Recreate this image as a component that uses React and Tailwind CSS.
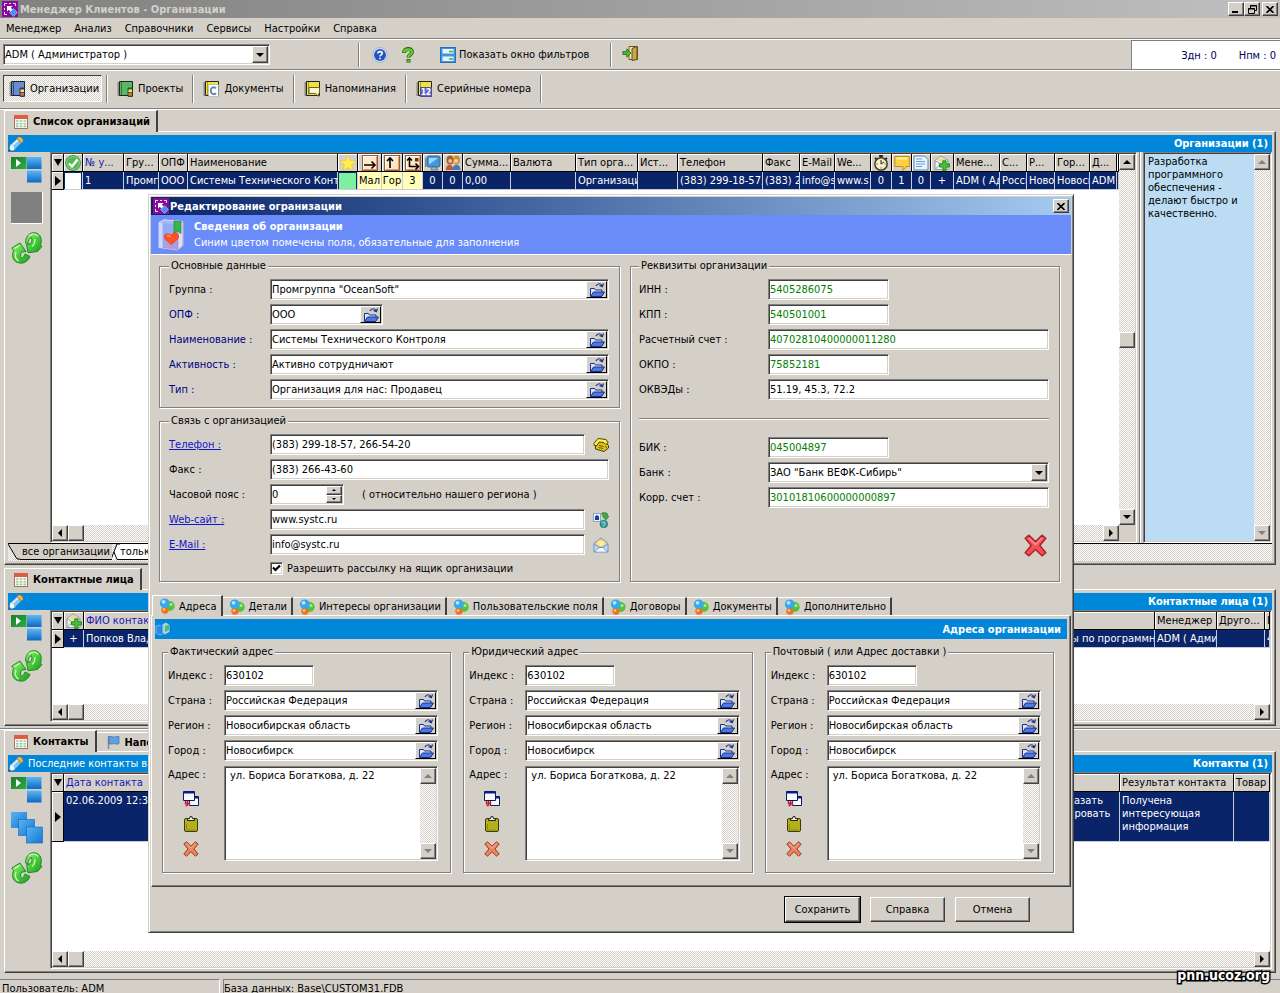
import { useId } from "react";
import clsx from "clsx";

const SUNKEN =
  "border border-t-[#808080] border-l-[#808080] border-b-white border-r-white shadow-[inset_1px_1px_0_#404040,inset_-1px_-1px_0_#d4d0c8]";
const RAISED =
  "border border-t-white border-l-white border-b-[#404040] border-r-[#404040] shadow-[inset_-1px_-1px_0_#808080] bg-[#d4d0c8]";
const DITHER =
  "bg-[conic-gradient(#ffffff_25%,#d4d0c8_0_50%,#ffffff_0_75%,#d4d0c8_0)] bg-[length:2px_2px]";

/* ---------- icons ---------- */

function Svg({ size = 16, box = 16, children }) {
  return (
    <svg width={size} height={size} viewBox={`0 0 ${box} ${box}`} className="block shrink-0" aria-hidden="true">
      {children}
    </svg>
  );
}

const AppIcon = () => (
  <Svg>
    <rect width="16" height="16" fill="#8a0a9a" />
    <path d="M2.500 5V2.500H5M7 2.500h2M11 2.500h2.500V5M2.500 7v2M2.500 11v2.500H5" stroke="#f4d8ff" fill="none" />
    <path d="M5 5h5.500L8.800 6.700 11 9 9 11 6.700 8.800 5 10.500z" fill="#fff" />
    <path d="M11.500 7.500 15.500 11.500l-4 4-4-4z" fill="#4a90f0" stroke="#9cc8ff" strokeWidth=".6" />
  </Svg>
);

const HelpBlue = () => (
  <Svg>
    <circle cx="8" cy="8" r="7.300" fill="#e4edfa" stroke="#8aa4cf" strokeWidth=".8" />
    <circle cx="8" cy="8" r="6" fill="#2456b8" />
    <path d="M5.800 6.500C5.800 4 10.200 4 10.200 6.500 10.200 8 8 7.800 8 9.500M8 10.800v1.500" stroke="#fff" strokeWidth="1.600" fill="none" />
  </Svg>
);

const HelpGreen = () => (
  <Svg>
    <path d="M4 6C4 .8 12 .8 12 5 12 7.500 8.500 7.500 8.500 10.500M8.500 12v3.500" stroke="#1d6b10" strokeWidth="4" fill="none" />
    <path d="M4 5.500C4.300 1.500 12 1.500 12 5 12 7.500 8.500 7.500 8.500 10M8.500 12.700v2" stroke="#6fd02c" strokeWidth="2.200" fill="none" />
  </Svg>
);

const FilterIcon = () => (
  <Svg>
    <rect x=".5" y=".5" width="15" height="15" fill="#3f97e0" stroke="#2a70b8" />
    <rect x="2.500" y="2" width="11" height="4.500" fill="#e8f5ff" />
    <rect x="2.500" y="9.500" width="11" height="4.500" fill="#e8f5ff" />
    <path d="M9 4.500h4M9 12h4" stroke="#58a830" strokeWidth="1.500" />
  </Svg>
);

const ExitIcon = () => (
  <Svg>
    <path d="M7 1.500h8.500v13H7z" fill="#efe9c8" stroke="#6b5a1c" />
    <path d="M10 3.500 15 1.500v13l-5 1z" fill="#c9a94a" stroke="#5f4c10" />
    <path d="M.8 6.500h4V3.800L9 8l-4.200 4.200V9.500h-4z" fill="#49b934" stroke="#1f6d14" strokeWidth=".8" />
  </Svg>
);

function Notebook({ fill, dark, kind }) {
  return (
    <Svg>
      <path d="M2.500.5h13v14h-13z" fill={fill} stroke="#222" />
      <path d="M4.500 1v13" stroke={dark} />
      <path d="M.5 2h2M.5 4h2M.5 6h2M.5 8h2M.5 10h2M.5 12h2M.5 14h2" stroke="#333" strokeWidth=".9" />
      {kind === "label" && (
        <>
          <path d="M11 7h4.500v8.500H11z" fill={dark} stroke="#222" strokeWidth=".7" />
          <path d="M11.500 8.500h3.500v2.500h-3.500z" fill="#ffe35a" />
          <path d="M11.500 12h3.500v2.500h-3.500z" fill="#e07040" />
        </>
      )}
      {kind === "doc" && (
        <>
          <path d="M5.500 3.500h10v12h-10z" fill="#fff" stroke="#888" strokeWidth=".8" strokeDasharray="1 1" />
          <path d="M13 7.300C11 5 7.800 6.500 7.800 9.700s3.200 4.700 5.200 2.400" stroke="#5f88b8" strokeWidth="2" fill="none" />
        </>
      )}
      {kind === "note" && <path d="M5 6.500h10.500v6h-1v3l-3-3H5z" fill="#fff9c8" stroke="#5a5220" strokeWidth=".9" />}
      {kind === "num" && (
        <>
          <rect x="4.500" y="6.500" width="11" height="9" fill="#6a6ac0" stroke="#4c4ca0" />
          <text x="10" y="14" textAnchor="middle" fontSize="8" fontWeight="bold" fill="#fff" fontFamily="DejaVu Sans Condensed, sans-serif">
            12
          </text>
        </>
      )}
    </Svg>
  );
}

const TableIcon = () => (
  <Svg>
    <rect x="1.500" y="1.500" width="13" height="13" fill="#f7faf2" stroke="#a8705c" />
    <rect x="1" y="1" width="14" height="4" fill="#e05a44" />
    <path d="M3 7h2.500M6.700 7h2.500M10.500 7H13M3 9.700h2.500M6.700 9.700h2.500M10.500 9.700H13M3 12.400h2.500M6.700 12.400h2.500M10.500 12.400H13" stroke="#98c8a0" strokeWidth="1.600" />
  </Svg>
);

const FlagIcon = () => (
  <Svg>
    <path d="M3.500 2v13" stroke="#7a8a9a" strokeWidth="1.500" />
    <path d="M4 3c3-2 4 1.500 7-.5h3v7c-3 2-4-1-7 .5H4z" fill="#5da2e0" stroke="#3a70ac" strokeWidth=".7" />
  </Svg>
);

const PencilIcon = () => (
  <Svg>
    <path d="M1 15 2.500 8.500 9 2.500l4.500 4.500-7 7z" fill="#7cc4fa" stroke="#2c6ca8" strokeWidth=".8" />
    <path d="M2.500 8.500 5.500 10l1 4L1 15z" fill="#f6fbff" />
    <path d="M4.500 9 10 4" stroke="#d8efff" strokeWidth="2" />
    <path d="M9 2.500C10.500-.5 15.500 1.500 15 5.500L13.500 7z" fill="#ffb640" stroke="#c27410" strokeWidth=".7" />
    <path d="M1 15l.5-2.200L3 14.500z" fill="#223" />
  </Svg>
);

const BlocksIcon = () => (
  <svg width="32" height="28" viewBox="0 0 32 28" className="block shrink-0" aria-hidden="true">
    <defs>
      <linearGradient id="blk" x1="0" y1="0" x2="0" y2="1">
        <stop offset="0" stopColor="#5cb8f5" />
        <stop offset="1" stopColor="#0c68c4" />
      </linearGradient>
      <linearGradient id="blkg" x1="0" y1="0" x2="1" y2="1">
        <stop offset="0" stopColor="#1c7c30" />
        <stop offset="1" stopColor="#28b040" />
      </linearGradient>
    </defs>
    <rect x="0" y="1" width="15.500" height="12" fill="url(#blkg)" />
    <path d="M5 3v8l5-4z" fill="#fff" />
    <rect x="16" y="1" width="14.500" height="12" fill="url(#blk)" />
    <rect x="16" y="14.500" width="14.500" height="12" fill="url(#blk)" />
  </svg>
);

const StackIcon = () => (
  <Svg size={32} box={32}>
    <defs>
      <linearGradient id="stk" x1="0" y1="0" x2="1" y2="1">
        <stop offset="0" stopColor="#58b4f4" />
        <stop offset="1" stopColor="#1478d4" />
      </linearGradient>
    </defs>
    <rect x="0" y="0" width="16" height="16" fill="url(#stk)" />
    <rect x="7.500" y="7.500" width="16" height="16" fill="url(#stk)" stroke="#0e66b8" strokeWidth=".6" />
    <rect x="15.500" y="15" width="16" height="16" fill="url(#stk)" stroke="#0e66b8" strokeWidth=".6" />
  </Svg>
);

const RefreshIcon = () => (
  <Svg size={32} box={32}>
    <defs>
      <linearGradient id="rfr" x1="0" y1="0" x2="1" y2="1">
        <stop offset="0" stopColor="#a4f47c" />
        <stop offset=".5" stopColor="#48cc3c" />
        <stop offset="1" stopColor="#1f9a22" />
      </linearGradient>
    </defs>
    <path
      d="M14.500 11C14.500 4 19 0 24 .8c5.500 1 7.500 6 5.500 12.700l1.500 1-4.500 5-9.500 1.200-1.500-8 3.500-.7c1.800-.5 2.500-4 1.500-6.500-2 .5-3.500 2.500-3.500 6.500z"
      fill="url(#rfr)"
      stroke="#1f8a24"
      strokeLinejoin="round"
    />
    <path d="M18 4c3-3 7-2.500 9 .5M24 7c0 4-1 6-3 7.500" stroke="#d4fcc0" strokeWidth="1.200" fill="none" />
    <path
      d="M.8 16 9 11l6 8.500-4 .5c-1.800 1.500-2 4-.5 6.500 2-1 2.500-2.500 3.500-4.500l5 2.500C16.500 30 12.500 31.700 8.500 31 2 30 .5 25 2.500 18.500z"
      fill="url(#rfr)"
      stroke="#1f8a24"
      strokeLinejoin="round"
    />
    <path d="M3.500 16.500 8.500 13.500M5 20c-1.500 4-.5 7 2.500 9" stroke="#d4fcc0" strokeWidth="1.200" fill="none" />
  </Svg>
);

const CheckIcon = () => (
  <Svg>
    <circle cx="8" cy="8" r="7.400" fill="#58b850" stroke="#3c9840" />
    <circle cx="8" cy="8" r="6.400" fill="none" stroke="#a8e0a0" strokeWidth=".7" />
    <path d="M4 8.500 7 11.500 12.500 4.500" stroke="#fff" strokeWidth="2.400" fill="none" />
  </Svg>
);

const StarIcon = () => (
  <Svg>
    <path d="M8 .5 10.300 5.500 15.700 6 11.700 9.800 12.900 15.300 8 12.500 3.100 15.300 4.300 9.800.3 6l5.400-.5z" fill="#fff04c" stroke="#f0c030" strokeWidth=".7" />
  </Svg>
);

function ArrowTile({ d, dot }) {
  return (
    <Svg>
      <rect x=".5" y=".5" width="15" height="15" fill="#ffe8c8" stroke="#906040" />
      <path d="M1.500 14V1.500H14" stroke="#fff" fill="none" />
      <path d="M14.500 1.500v13H1.500" stroke="#e89860" fill="none" />
      <path d={d} stroke="#000" strokeWidth="1.600" fill="none" />
      {dot && <rect x="10" y="3" width="3.500" height="3.500" fill="#6a3410" />}
    </Svg>
  );
}

const ScreenIcon = () => (
  <Svg>
    <rect x="2" y="1" width="13" height="11" rx="2" fill="#3c9adf" stroke="#3c6484" />
    <path d="M4 3h9L4 9.500z" fill="#9cd8fc" />
    <path d="M7 12h4l2 3H6z" fill="#9ab4c8" stroke="#4c6478" strokeWidth=".7" />
    <path d="M.8 3v9" stroke="#708090" strokeWidth="1.400" />
  </Svg>
);

const PeopleIcon = () => (
  <Svg>
    <ellipse cx="5" cy="5" rx="3.500" ry="4.500" fill="#a0602c" />
    <ellipse cx="11.500" cy="5" rx="3.500" ry="4.500" fill="#d09030" />
    <circle cx="5.200" cy="6" r="2" fill="#f0c090" />
    <circle cx="11" cy="6" r="2" fill="#f8d0a0" />
    <path d="M.8 15c0-7 7.500-7 7.500 0z" fill="#c85838" />
    <path d="M7.500 15c0-7 8-7 8 0z" fill="#4878c0" />
  </Svg>
);

const ClockIcon = () => (
  <Svg>
    <path d="M6 .8h4M8 1v2M2 3l2 1.500M14 3l-2 1.500" stroke="#222" strokeWidth="2" />
    <circle cx="8" cy="9" r="6.200" fill="#f6efcc" stroke="#4a3c18" strokeWidth="1.500" />
    <path d="M8 9V5M8 9l3-2M3.500 9h1M11.500 9h1M8 12.500v1" stroke="#222" />
  </Svg>
);

const BubbleIcon = () => (
  <Svg>
    <path d="M.8 1.500h14.500v10H12L9 15.500v-4H.8z" fill="#ffd040" stroke="#c89210" />
    <path d="M2.500 3.500h11" stroke="#fff3a8" strokeWidth="2" />
  </Svg>
);

const PageIcon = () => (
  <Svg>
    <path d="M1 1h10.500L15 4.500V15H1z" fill="#e6f2fc" stroke="#5a8ab8" />
    <path d="M3 4h6M3 6.500h9M3 9h9M3 11.500h6" stroke="#6ca0d0" />
  </Svg>
);

const MailPlusIcon = () => (
  <Svg>
    <path d="M1 5.500 7 .8 14 5.500v9H1z" fill="#f2f4e4" stroke="#8a9aa8" />
    <path d="M3 5C4 1 10.500 1 11.500 5L7.500 8z" fill="#e8dc98" />
    <path d="M1 5.500l6.200 4 6.800-4M1 14.500l5-5" stroke="#8a9aa8" fill="none" />
    <path d="M8.800 5.800h3.200v3h3.500V12H12v3.500H8.800V12H5.500V8.800h3.300z" fill="#45c038" stroke="#1c7a18" strokeWidth=".8" />
  </Svg>
);

const OpenFolder = () => (
  <Svg>
    <path d="M1.500 14V6.500h4l1 1.500H13v6z" fill="#dbe6ff" stroke="#16308c" />
    <path d="M1.500 14.500 4.500 10H15.500l-3 4.500z" fill="#4e78e0" stroke="#16308c" />
    <path d="M7 4C8.500 1 12 1 13 4M14.500 1.500 13.300 4.800 10.500 3.500" stroke="#16308c" fill="none" strokeWidth="1.200" />
  </Svg>
);

const PhoneIcon = () => (
  <Svg>
    <path d="M2.500 7.500 6 4.500h6l3.500 4V11L11 14.500 2.500 12z" fill="#d8c418" stroke="#4a4008" />
    <path d="M.8 6.500 5 1.500 13 2.500l2.200 3.300-2.400 1.700-2-2L6.200 5 4 8.500 1.500 8.800z" fill="#fff04c" stroke="#4a4008" />
    <path d="M6 8.500l4.500 1M5.500 10.500l4.500 1M12 9.500l2 1" stroke="#6a5c08" />
  </Svg>
);

const WebIcon = () => (
  <Svg>
    <rect x=".5" y="1.500" width="7" height="8" fill="#eaf2ff" stroke="#8ca4d0" />
    <path d="M2 8V4.500L4 3l2 1.500V8z" fill="#1c3c90" />
    <path d="M9 .8h3.500c2 0 2.500 1.500 2 3.500H16L13 8 9.500 4.300h1.800c0-1-.5-1.500-2.300-1.500z" fill="#3cb040" stroke="#1c6c28" strokeWidth=".6" />
    <circle cx="10.800" cy="12" r="3.800" fill="#2c98b8" stroke="#14586c" strokeWidth=".6" />
    <path d="M8.500 11c1.500-2 3-1 3.500 0s-2 1.500-1.500 3.500" stroke="#78e07c" strokeWidth="1.400" fill="none" />
  </Svg>
);

const EnvelopeIcon = () => (
  <Svg>
    <path d="M1 6.500 8 1l7 5.500v8.500H1z" fill="#c4dcf8" stroke="#6c94c8" />
    <path d="M3 7C4 1.500 12 1.500 13 7L8 10z" fill="#ffe8a0" stroke="#e8b850" strokeWidth=".8" />
    <path d="M1 7l5 3.500L1 15M15 7l-5 3.500L15 15M6 10.500h4" stroke="#6c94c8" fill="none" />
    <path d="M2.500 14.500 6.300 11h3.400l3.800 3.500z" fill="#f0f7ff" />
  </Svg>
);

const BookIcon = () => (
  <svg width="26" height="32" viewBox="0 0 26 32" className="block shrink-0" aria-hidden="true">
    <defs>
      <linearGradient id="book" x1="0" y1="0" x2="0" y2="1">
        <stop offset="0" stopColor="#8cb0f8" />
        <stop offset="1" stopColor="#b898d8" />
      </linearGradient>
    </defs>
    <path d="M1 3.500 6 .8 25 2.500v24L20 31 1 28.500z" fill="#a8b8f0" stroke="#e4ecff" strokeWidth=".8" />
    <path d="M4.500 4 20 5.500V31L4.500 29z" fill="url(#book)" />
    <path d="M1 3.500 4.500 4v25L1 28.500z" fill="#ccd8fc" />
    <path d="M20 5.500l5-3v24L20 31z" fill="#e4dcf4" stroke="#8c84c8" strokeWidth=".6" />
    <path d="M16 2l7 .6v12L19.500 12 16 14z" fill="#38b848" stroke="#1c8030" strokeWidth=".6" />
    <path d="M13.500 25.500 8 21c-4-4.500 1-8.500 5-4.500 3-5 9.500-2 7 3z" fill="#ff5420" stroke="#d43818" strokeWidth=".7" />
    <path d="M9 17c1.500-1 2.500 0 3.500 1" stroke="#ffb080" strokeWidth="1.200" fill="none" />
  </svg>
);

const BallsIcon = () => (
  <Svg>
    <circle cx="10.700" cy="8" r="5" fill="#52c43c" />
    <circle cx="6" cy="12" r="3.700" fill="#f07020" />
    <circle cx="5.800" cy="5.300" r="4.900" fill="#38a8e8" />
    <circle cx="4.600" cy="3.800" r="1.900" fill="#b4e4ff" />
    <circle cx="5" cy="11.500" r="1.300" fill="#ffd060" />
    <circle cx="12" cy="6.500" r="1.500" fill="#a8ec90" />
  </Svg>
);

const HouseIcon = () => (
  <Svg>
    <path d="M1 5l4-1 3 2v7l-3 1-4-2z" fill="#2c8ce0" stroke="#8cc8ff" strokeWidth=".7" />
    <path d="M7 3l4-2 4 3v7l-5 3-3-2z" fill="#9cd4f4" stroke="#1c64b0" strokeWidth=".7" />
    <path d="M10 5l4-1v5l-4 2z" fill="#48c060" />
  </Svg>
);

const CopyIcon = () => (
  <Svg>
    <path d="M6.500 5.500h9v9h-9z" fill="#f4f8ff" stroke="#101858" />
    <path d="M6.500 6.500h9" stroke="#101890" strokeWidth="2" />
    <path d="M.5.5h11v9H.5z" fill="#f4f8ff" stroke="#101858" />
    <path d="M.5 1.500h11" stroke="#101890" strokeWidth="2" />
    <path d="M2.500 10v2.500H7M4.500 10v4.500M6.500 10.500V15M2.500 14.500h2" stroke="#c01828" strokeWidth="1.300" fill="none" />
  </Svg>
);

const PasteIcon = () => (
  <Svg>
    <rect x="1.500" y="2.500" width="13" height="13" rx="1.500" fill="#b4b01c" stroke="#3c3c08" />
    <path d="M4.500 4.500V3L6.500 2.500 7 .7h2l.5 1.800 2 .5v1.500z" fill="#f0f0e0" stroke="#222" />
    <path d="M3.500 8v6h9" stroke="#8c8810" fill="none" />
  </Svg>
);

function CrossIcon({ size, fill, stroke }) {
  return (
    <Svg size={size}>
      <path
        d="M.8 3 3.500.8 8 5.200 12.500.8 15.200 3 11 8 15.200 13l-2.700 2.200L8 10.800 3.500 15.200.8 13 5 8z"
        fill={fill}
        stroke={stroke}
        strokeLinejoin="round"
      />
      <path d="M3.300 2.800 8 7.300l4.600-4.500" stroke="#fff" strokeOpacity=".4" fill="none" />
    </Svg>
  );
}

function Triangle({ dir, muted }) {
  const d = {
    up: "M4 0 8 4H0z",
    down: "M0 0h8L4 4z",
    left: "M4 0v8L0 4z",
    right: "M0 0v8l4-4z",
  }[dir];
  const vertical = dir === "up" || dir === "down";
  return (
    <svg
      width={vertical ? 8 : 4}
      height={vertical ? 4 : 8}
      viewBox={vertical ? "0 0 8 4" : "0 0 4 8"}
      className="block"
      aria-hidden="true"
    >
      <path d={d} fill={muted ? "#808080" : "#000"} />
    </svg>
  );
}

/* ---------- basic controls ---------- */

function ScrollButton({ dir, muted }) {
  return (
    <button type="button" aria-label={dir} className={clsx(RAISED, "flex size-4 shrink-0 items-center justify-center")}>
      <Triangle dir={dir} muted={muted} />
    </button>
  );
}

function HScroll({ rightGap }) {
  return (
    <div className="flex h-4 shrink-0">
      <ScrollButton dir="left" />
      <div className={clsx("flex flex-1", DITHER)}>
        <div className={clsx(RAISED, "w-4")} />
      </div>
      <ScrollButton dir="right" />
      {rightGap && <div className="w-4 bg-[#d4d0c8]" />}
    </div>
  );
}

function VScroll({ muted, thumb }) {
  return (
    <div className={clsx("flex w-4 shrink-0 flex-col", DITHER)}>
      <ScrollButton dir="up" muted={muted} />
      <div className="flex flex-1 flex-col justify-center">{thumb && <div className={clsx(RAISED, "size-4")} />}</div>
      <ScrollButton dir="down" muted={muted} />
    </div>
  );
}

function VLine({ className }) {
  return <div className={clsx("w-0.5 border-l border-r border-l-[#808080] border-r-white", className)} />;
}

function HLine({ className }) {
  return <div className={clsx("h-0.5 shrink-0 border-t border-b border-t-[#808080] border-b-white", className)} />;
}

function TextField({ id, value, color = "text-black", className }) {
  return (
    <input
      id={id}
      type="text"
      defaultValue={value}
      className={clsx(SUNKEN, "h-[21px] min-w-0 bg-white px-px outline-none", color, className)}
    />
  );
}

function LookupField({ id, value, className }) {
  return (
    <div className={clsx(SUNKEN, "flex h-[21px] min-w-0 bg-white p-px", className)}>
      <input id={id} type="text" defaultValue={value} className="min-w-0 flex-1 bg-transparent outline-none" />
      <button
        type="button"
        aria-label="Выбрать"
        className="flex w-[21px] shrink-0 items-center justify-center border border-t-white border-l-white border-b-black border-r-black bg-[#d4d0c8]"
      >
        <OpenFolder />
      </button>
    </div>
  );
}

function SelectField({ id, value, label, className }) {
  return (
    <div className={clsx(SUNKEN, "relative flex h-[21px] bg-white p-px", className)}>
      <select id={id} aria-label={label} className="min-w-0 flex-1 appearance-none bg-transparent outline-none">
        <option>{value}</option>
      </select>
      <span className={clsx(RAISED, "pointer-events-none absolute inset-y-px right-px flex w-4 items-center justify-center")}>
        <Triangle dir="down" />
      </span>
    </div>
  );
}

function Group({ title, className, children }) {
  return (
    <fieldset
      className={clsx(
        "min-w-0 border border-[#808080] shadow-[1px_1px_0_#fff,inset_1px_1px_0_#fff]",
        className
      )}
    >
      <legend className="h-3.5 bg-[#d4d0c8] px-0.5 leading-[14px]">{title}</legend>
      {children}
    </fieldset>
  );
}

/* ---------- data grids ---------- */

function Grid({ cols, cells, rowClass, multiline }) {
  return (
    <table className="w-full table-fixed border-separate border-spacing-0">
      <colgroup>
        <col className="w-3" />
        {cols.map((c, i) => (
          <col key={i} className={c.w} />
        ))}
      </colgroup>
      <thead>
        <tr className="h-[18px]">
          <th className="overflow-hidden border-r border-b border-black bg-[#d4d0c8] p-0 font-normal shadow-[inset_1px_1px_0_#fff]">
            <svg width="8" height="7" viewBox="0 0 8 7" className="mx-auto block" aria-hidden="true">
              <path d="M0 0h8L4 7z" />
            </svg>
          </th>
          {cols.map((c, i) => (
            <th
              key={i}
              scope="col"
              className={clsx(
                "overflow-hidden border-r border-b border-black bg-[#d4d0c8] p-0 text-left font-normal whitespace-nowrap shadow-[inset_1px_1px_0_#fff]",
                c.color
              )}
            >
              {c.icon ? (
                <div className="flex h-[17px] items-center justify-center">{c.icon}</div>
              ) : (
                <div className="overflow-hidden pl-0.5">{c.t}</div>
              )}
            </th>
          ))}
        </tr>
      </thead>
      <tbody>
        <tr className={rowClass}>
          <td className="border-r border-b border-black bg-[#d4d0c8] p-0 shadow-[inset_1px_1px_0_#fff]">
            <svg width="6" height="10" viewBox="0 0 6 10" className="mx-auto block" aria-hidden="true">
              <path d="M0 0v10l6-5z" />
            </svg>
          </td>
          {cells.map((c, i) => {
            const cell = typeof c === "string" ? { t: c } : c;
            return (
              <td
                key={i}
                className={clsx(
                  "overflow-hidden border-r border-b border-[#c8ccd8] p-0",
                  multiline ? "pt-0.5 align-top whitespace-pre" : "whitespace-nowrap",
                  cell.cls ?? "bg-[#0a246a] text-white"
                )}
              >
                {cell.node ?? <div className={clsx("overflow-hidden", cell.center ? "text-center" : "pl-0.5")}>{cell.t}</div>}
              </td>
            );
          })}
        </tr>
      </tbody>
    </table>
  );
}

const YELLOW = "bg-[#ffffb8] text-black";

const ORG_COLS = [
  { w: "w-[19px]", icon: <CheckIcon /> },
  { w: "w-[41px]", t: "№ у...", color: "text-[#1818b0]" },
  { w: "w-[35px]", t: "Гру..." },
  { w: "w-[29px]", t: "ОПФ" },
  { w: "w-[150px]", t: "Наименование" },
  { w: "w-5", icon: <StarIcon /> },
  { w: "w-6", icon: <ArrowTile d="M2 10h11M9.500 6.500l3.500 3.500-3.500 3.500" /> },
  { w: "w-[21px]", icon: <ArrowTile d="M6 13V3M3 6l3-3 3 3" /> },
  { w: "w-5", icon: <ArrowTile dot d="M4.500 12V3M2 5.500 4.500 3 7 5.500M4.500 11.500H13M10.500 8.500l3 3-3 3" /> },
  { w: "w-5", icon: <ScreenIcon /> },
  { w: "w-5", icon: <PeopleIcon /> },
  { w: "w-12", t: "Сумма..." },
  { w: "w-[65px]", t: "Валюта" },
  { w: "w-[62px]", t: "Тип орга..." },
  { w: "w-10", t: "Ист..." },
  { w: "w-[85px]", t: "Телефон" },
  { w: "w-[37px]", t: "Факс" },
  { w: "w-[35px]", t: "E-Mail" },
  { w: "w-9", t: "We..." },
  { w: "w-[21px]", icon: <ClockIcon /> },
  { w: "w-5", icon: <BubbleIcon /> },
  { w: "w-[19px]", icon: <PageIcon /> },
  { w: "w-[23px]", icon: <MailPlusIcon /> },
  { w: "w-[46px]", t: "Мене..." },
  { w: "w-[27px]", t: "С..." },
  { w: "w-7", t: "Р..." },
  { w: "w-[35px]", t: "Гор..." },
  { w: "w-[27px]", t: "Д..." },
  { t: "С" },
];

const ORG_CELLS = [
  { node: <div className="mx-px h-4 bg-white" /> },
  "1",
  "Промгр",
  "ООО",
  "Системы Технического Контр",
  { node: <div className="mx-px h-4 bg-[#7cf0a0]" /> },
  { t: "Мал", cls: YELLOW, center: true },
  { t: "Гор", cls: YELLOW, center: true },
  { t: "3", cls: YELLOW, center: true },
  { t: "0", center: true },
  { t: "0", center: true },
  "0,00",
  "",
  "Организаци",
  "",
  "(383) 299-18-57,",
  "(383) 2",
  "info@s",
  "www.s",
  { t: "0", center: true },
  { t: "1", center: true },
  { t: "0", center: true },
  { t: "+", center: true },
  "ADM ( Ад",
  "Росси",
  "Новос",
  "Новоси",
  "ADM",
  "Р",
];

/* ---------- main window ---------- */

function ToolIcon({ label, children }) {
  return (
    <button type="button" aria-label={label} className="shrink-0">
      {children}
    </button>
  );
}

function PanelTab({ icon, active = true, children }) {
  return (
    <button
      type="button"
      className={clsx(
        "flex items-center gap-1 border-t border-r-2 border-t-white border-r-[#404040] pr-1.5 pl-2 font-bold",
        active ? "relative z-10 -mb-px h-[22px] border-l border-l-white bg-[#d4d0c8]" : "mt-0.5 h-[19px]"
      )}
    >
      {icon}
      {children}
    </button>
  );
}

function Panel({ tabs, title, note, tools, className, children }) {
  return (
    <section className={clsx("mr-1 ml-1 flex flex-col", className)}>
      <div className="flex h-[21px] shrink-0">{tabs}</div>
      <div className="flex flex-1 flex-col border border-t-white border-l-white border-r-[#404040] border-b-[#404040] p-[3px] shadow-[inset_-1px_-1px_0_#808080]">
        <div className="flex h-[17px] shrink-0 items-center gap-1 bg-[#0087d9] pr-1 text-white">
          <PencilIcon />
          <span>{note}</span>
          <h2 className="ml-auto font-bold">{title}</h2>
        </div>
        <div className="flex flex-1">
          <div className="flex w-[42px] shrink-0 flex-col items-start gap-2 pt-1 pl-[3px]">{tools}</div>
          {children}
        </div>
      </div>
    </section>
  );
}

function MainWindow() {
  const nav = [
    ["Проекты", <Notebook fill="#58b868" dark="#2c7c3c" kind="label" />],
    ["Документы", <Notebook fill="#f0e040" dark="#b09c18" kind="doc" />],
    ["Напоминания", <Notebook fill="#f0e040" dark="#b09c18" kind="note" />],
    ["Серийные номера", <Notebook fill="#f0e040" dark="#b09c18" kind="num" />],
  ];
  return (
    <>
      <header className="flex h-[18px] shrink-0 items-center gap-0.5 bg-linear-to-r from-[#808080] to-[#c0c0c0] pr-0.5 pl-0.5 text-[#d4d0c8]">
        <AppIcon />
        <h1 className="font-bold">Менеджер Клиентов - Организации</h1>
        <div className="ml-auto flex text-black">
          <button type="button" aria-label="Свернуть" className={clsx(RAISED, "flex h-3.5 w-4 items-end pb-0.5 pl-[3px]")}>
            <svg width="6" height="2" className="block"><rect width="6" height="2" /></svg>
          </button>
          <button type="button" aria-label="Восстановить" className={clsx(RAISED, "mr-0.5 flex h-3.5 w-4 items-center justify-center")}>
            <svg width="9" height="9" className="block">
              <path d="M2.500 3V.5h6v5H7M2 1h7M.5 3.500h6v5h-6zM0 4h7" stroke="#000" fill="none" />
            </svg>
          </button>
          <button type="button" aria-label="Закрыть" className={clsx(RAISED, "flex h-3.5 w-4 items-center justify-center")}>
            <svg width="8" height="7" className="block"><path d="M.5 0l7 7M7.500 0l-7 7" stroke="#000" strokeWidth="1.600" /></svg>
          </button>
        </div>
      </header>

      <nav className="flex h-5 shrink-0 items-center gap-[13px] px-1.5" aria-label="Меню">
        {["Менеджер", "Анализ", "Справочники", "Сервисы", "Настройки", "Справка"].map((m) => (
          <button key={m} type="button">{m}</button>
        ))}
      </nav>
      <HLine />

      <div className="flex h-[29px] shrink-0 items-center pl-[3px]">
        <SelectField label="Пользователь" value="ADM ( Администратор )" className="w-[267px]" />
        <VLine className="ml-[88px] h-6" />
        <div className="ml-3 flex items-center gap-3">
          <ToolIcon label="Помощь"><HelpBlue /></ToolIcon>
          <ToolIcon label="Подсказка"><HelpGreen /></ToolIcon>
        </div>
        <button type="button" className="ml-6 flex items-center gap-[3px]">
          <FilterIcon />
          Показать окно фильтров
        </button>
        <VLine className="ml-[21px] h-6" />
        <div className="ml-2.5">
          <ToolIcon label="Выход"><ExitIcon /></ToolIcon>
        </div>
        <div className="ml-auto flex w-[149px] items-center justify-end gap-[22px] self-stretch border-t border-l border-[#808080] bg-white pr-1 text-[#000060]">
          <span>Здн : 0</span>
          <span>Нпм : 0</span>
        </div>
      </div>
      <HLine />

      <div className="flex h-[37px] shrink-0 items-center pb-0.5 pl-[3px]">
        <button
          type="button"
          className={clsx(DITHER, "flex h-[27px] w-[99px] items-center gap-[5px] border border-t-[#404040] border-l-[#404040] border-b-white border-r-white pl-[5px]")}
        >
          <Notebook fill="#6c8cd0" dark="#30488c" kind="label" />
          Организации
        </button>
        <VLine className="ml-1 h-7" />
        {nav.map(([label, icon]) => (
          <div key={label} className="flex items-center">
            <button type="button" className="flex h-[27px] items-center gap-[5px] pr-[9px] pl-[9px]">
              {icon}
              {label}
            </button>
            <VLine className="h-7" />
          </div>
        ))}
      </div>
      <HLine />

      <Panel
        className="h-[455px] shrink-0"
        tabs={<PanelTab icon={<TableIcon />}>Список организаций</PanelTab>}
        title="Организации (1)"
        tools={
          <>
            <ToolIcon label="Операции"><BlocksIcon /></ToolIcon>
            <div className="size-8 border-r border-b border-white bg-[#808080]" />
            <ToolIcon label="Обновить"><RefreshIcon /></ToolIcon>
          </>
        }
      >
        <div className="flex min-w-0 flex-1 flex-col">
          <div className="flex flex-1">
            <div className={clsx(SUNKEN, "flex min-w-0 flex-1 flex-col bg-white p-px")}>
              <div className="flex min-w-0 flex-1">
                <div className="min-w-0 flex-1 overflow-hidden">
                  <Grid cols={ORG_COLS} cells={ORG_CELLS} rowClass="h-[18px]" />
                </div>
                <VScroll thumb />
              </div>
              <HScroll rightGap />
            </div>
            <VLine className="mx-0.5" />
            <div className={clsx(SUNKEN, "flex w-[129px] shrink-0 bg-[#bbdcf3] p-px")}>
              <p className="flex-1 px-[3px] pt-px leading-[13px]">
                Разработка
                <br />
                программного
                <br />
                обеспечения -
                <br />
                делают быстро и
                <br />
                качественно.
              </p>
              <VScroll muted />
            </div>
          </div>
          <div className={clsx(DITHER, "-ml-[42px] flex h-[18px] shrink-0 border-t border-black")}>
            <svg width="12" height="17" className="block"><path d="M0 0l10 16h2V0z" fill="#d4d0c8" /><path d="M0 0l9 15h3" stroke="#000" fill="none" /></svg>
            <button type="button" className="h-4 border-b border-black bg-[#d4d0c8] px-0.5">все организации</button>
            <svg width="8" height="17" className="block"><path d="M5 0h3v15H0z" fill="#fff" /><path d="M-1 15.500 5 0h3M2 8l3 7.500h3" stroke="#000" fill="none" /></svg>
            <button type="button" className="h-4 border-b border-black bg-white pr-px">только активные</button>
          </div>
        </div>
      </Panel>

      <Panel
        className="mt-[3px] h-[158px] shrink-0"
        tabs={<PanelTab icon={<TableIcon />}>Контактные лица</PanelTab>}
        title="Контактные лица (1)"
        tools={
          <>
            <ToolIcon label="Операции"><BlocksIcon /></ToolIcon>
            <ToolIcon label="Обновить"><RefreshIcon /></ToolIcon>
          </>
        }
      >
        <div className={clsx(SUNKEN, "flex min-w-0 flex-1 flex-col bg-white p-px")}>
          <div className="flex-1 overflow-hidden">
            <Grid
              rowClass="h-[18px]"
              cols={[
                { w: "w-5", icon: <MailPlusIcon /> },
                { t: "ФИО контакта", color: "text-[#1818b0]" },
                { w: "w-[86px]", t: "" },
                { w: "w-[62px]", t: "Менеджер" },
                { w: "w-12", t: "Друго..." },
                { w: "w-[5px]", t: "I" },
              ]}
              cells={[{ t: "+", center: true }, "Попков Владимир", "ы по программн", "ADM ( Адми", "", "4"]}
            />
          </div>
          <HScroll />
        </div>
      </Panel>
      <HLine className="mt-0.5" />

      <Panel
        className="min-h-[242px] flex-1"
        tabs={
          <>
            <PanelTab icon={<TableIcon />}>Контакты</PanelTab>
            <PanelTab active={false} icon={<FlagIcon />}>Напоминания</PanelTab>
          </>
        }
        title="Контакты (1)"
        note="Последние контакты выбранной организации"
        tools={
          <>
            <ToolIcon label="Операции"><BlocksIcon /></ToolIcon>
            <ToolIcon label="Список"><StackIcon /></ToolIcon>
            <ToolIcon label="Обновить"><RefreshIcon /></ToolIcon>
          </>
        }
      >
        <div className={clsx(SUNKEN, "flex min-w-0 flex-1 flex-col bg-white p-px")}>
          <div className="flex-1 overflow-hidden">
            <Grid
              multiline
              rowClass="h-[50px]"
              cols={[
                { t: "Дата контакта", color: "text-[#1818b0]" },
                { w: "w-[54px]", t: "" },
                { w: "w-[114px]", t: "Результат контакта" },
                { w: "w-9", t: "Товар" },
              ]}
              cells={["02.06.2009 12:36", "казать\nировать", "Получена\nинтересующая\nинформация", ""]}
            />
          </div>
          <HScroll />
        </div>
      </Panel>

      <footer className="mt-1.5 flex h-[14px] shrink-0 items-end gap-[3px] overflow-hidden">
        <div className="h-full w-[220px] border-t border-r border-t-[#808080] border-r-white pt-0.5 pl-0.5">Пользователь: ADM</div>
        <div className="h-full flex-1 border-t border-l border-[#808080] pt-0.5">База данных: Base\CUSTOM31.FDB</div>
      </footer>
      <span className="absolute right-2.5 bottom-2.5 text-[14px] leading-4 font-bold text-white [paint-order:stroke] [-webkit-text-stroke:3px_#000]">
        pnn.ucoz.org
      </span>
    </>
  );
}

/* ---------- edit dialog ---------- */

function Row({ label, required, link, value, lookup, select, color, width = "flex-1", labelWidth = "w-[101px]", after }) {
  const id = useId();
  return (
    <div className="flex items-center">
      <label htmlFor={id} className={clsx(labelWidth, "shrink-0", required && "text-[#000080]")}>
        {link ? (
          <a href="#open" className="text-[#1414c8] underline">{label}</a>
        ) : (
          label
        )}
      </label>
      {lookup ? (
        <LookupField id={id} value={value} className={width} />
      ) : select ? (
        <SelectField id={id} value={value} className={width} />
      ) : (
        <TextField id={id} value={value} color={color} className={width} />
      )}
      {after}
    </div>
  );
}

function SideIcon({ label, children }) {
  return (
    <button type="button" aria-label={label} className="ml-2 shrink-0">
      {children}
    </button>
  );
}

function MainData() {
  return (
    <Group title="Основные данные" className="pr-[10px] pb-[7px] pl-[9px]">
      <div className="flex flex-col gap-1 pt-1.5">
        <Row label="Группа :" value={'Промгруппа "OceanSoft"'} lookup />
        <Row label="ОПФ :" required value="ООО" lookup width="w-[113px]" />
        <Row label="Наименование :" required value="Системы Технического Контроля" lookup />
        <Row label="Активность :" required value="Активно сотрудничают" lookup />
        <Row label="Тип :" required value="Организация для нас: Продавец" lookup />
      </div>
    </Group>
  );
}

function Communication() {
  const tz = useId();
  return (
    <Group title="Связь с организацией" className="pr-[10px] pb-1 pl-[9px]">
      <div className="flex flex-col gap-1 pt-1.5">
        <Row label="Телефон :" link value="(383) 299-18-57, 266-54-20" after={<SideIcon label="Позвонить"><PhoneIcon /></SideIcon>} />
        <Row label="Факс :" value="(383) 266-43-60" />
        <div className="flex items-center">
          <label htmlFor={tz} className="w-[101px] shrink-0">Часовой пояс :</label>
          <div className={clsx(SUNKEN, "flex h-[21px] w-[74px] bg-white p-px")}>
            <input id={tz} type="text" defaultValue="0" className="min-w-0 flex-1 bg-transparent outline-none" />
            <div className="flex w-4 flex-col">
              {["up", "down"].map((d) => (
                <button key={d} type="button" aria-label={d} className={clsx(RAISED, "flex flex-1 items-center justify-center")}>
                  <svg width="4" height="2" viewBox="0 0 4 2" className="block">
                    <path d={d === "up" ? "M2 0l2 2H0z" : "M0 0h4L2 2z"} />
                  </svg>
                </button>
              ))}
            </div>
          </div>
          <span className="ml-[18px]">( относительно нашего региона )</span>
        </div>
        <Row label="Web-сайт :" link value="www.systc.ru" after={<SideIcon label="Открыть сайт"><WebIcon /></SideIcon>} />
        <Row label="E-Mail :" link value="info@systc.ru" after={<SideIcon label="Написать письмо"><EnvelopeIcon /></SideIcon>} />
        <label className="ml-[101px] flex h-[18px] items-center gap-1">
          <input type="checkbox" defaultChecked className={clsx(SUNKEN, "peer size-[13px] appearance-none bg-white")} />
          <svg width="9" height="9" viewBox="0 0 9 9" className="pointer-events-none -ml-[15px] mr-0.5 block" aria-hidden="true">
            <path d="M1 3.500 3.500 6 8 1.500" stroke="#000" strokeWidth="2.200" fill="none" />
          </svg>
          <span>Разрешить рассылку на ящик организации</span>
        </label>
      </div>
    </Group>
  );
}

function Requisites() {
  const green = "text-[#008000]";
  const lw = "w-[129px]";
  return (
    <Group title="Реквизиты организации" className="pr-[10px] pl-2">
      <div className="flex flex-col gap-1 pt-1.5">
        <Row labelWidth={lw} label="ИНН :" value="5405286075" color={green} width="w-[121px]" />
        <Row labelWidth={lw} label="КПП :" value="540501001" color={green} width="w-[121px]" />
        <Row labelWidth={lw} label="Расчетный счет :" value="40702810400000011280" color={green} />
        <Row labelWidth={lw} label="ОКПО :" value="75852181" color={green} width="w-[121px]" />
        <Row labelWidth={lw} label="ОКВЭДы :" value="51.19, 45.3, 72.2" />
      </div>
      <HLine className="mt-[18px] mb-[17px]" />
      <div className="flex flex-col gap-1">
        <Row labelWidth={lw} label="БИК :" value="045004897" color={green} width="w-[121px]" />
        <Row labelWidth={lw} label="Банк :" value={'ЗАО "Банк ВЕФК-Сибирь"'} select />
        <Row labelWidth={lw} label="Корр. счет :" value="30101810600000000897" color={green} />
      </div>
      <div className="mt-[26px] flex justify-end pr-0.5">
        <ToolIcon label="Очистить реквизиты"><CrossIcon size={23} fill="#f05058" stroke="#b02028" /></ToolIcon>
      </div>
    </Group>
  );
}

function Address({ title }) {
  const id = useId();
  const lw = "w-14";
  return (
    <Group title={title} className="pr-3 pb-[11px] pl-[5px]">
      <div className="flex flex-col gap-1 pt-1.5">
        <Row labelWidth={lw} label="Индекс :" value="630102" width="w-[90px]" />
        <Row labelWidth={lw} label="Страна :" value="Российская Федерация" lookup />
        <Row labelWidth={lw} label="Регион :" value="Новосибирская область" lookup />
        <Row labelWidth={lw} label="Город :" value="Новосибирск" lookup />
        <div className="flex pt-px">
          <div className="flex w-14 shrink-0 flex-col items-start">
            <label htmlFor={id} className="pt-0.5">Адрес :</label>
            <div className="mt-2.5 ml-[15px] flex flex-col gap-[9px]">
              <ToolIcon label="Копировать"><CopyIcon /></ToolIcon>
              <ToolIcon label="Вставить"><PasteIcon /></ToolIcon>
              <ToolIcon label="Очистить"><CrossIcon size={16} fill="#e88460" stroke="#a03c20" /></ToolIcon>
            </div>
          </div>
          <div className={clsx(SUNKEN, "flex h-[95px] min-w-0 flex-1 bg-white p-px")}>
            <textarea
              id={id}
              defaultValue="ул. Бориса Богаткова, д. 22"
              className="min-w-0 flex-1 resize-none overflow-hidden bg-transparent pt-px pl-1 leading-[13px] outline-none"
            />
            <VScroll muted />
          </div>
        </div>
      </div>
    </Group>
  );
}

function EditDialog() {
  return (
    <section
      role="dialog"
      aria-labelledby="dlg-title"
      className="absolute top-[194px] left-[148px] z-20 w-[926px] border border-t-[#d4d0c8] border-l-[#d4d0c8] border-r-[#404040] border-b-[#404040] bg-[#d4d0c8] p-0.5 shadow-[inset_1px_1px_0_#fff,inset_-1px_-1px_0_#808080]"
    >
      <header className="flex h-[18px] items-center gap-px bg-linear-to-r from-[#0a246a] to-[#a6caf0] pr-0.5 pl-0.5 text-white">
        <AppIcon />
        <h2 id="dlg-title" className="font-bold">Редактирование огранизации</h2>
        <button type="button" aria-label="Закрыть" className={clsx(RAISED, "ml-auto flex h-3.5 w-4 items-center justify-center")}>
          <svg width="8" height="7" className="block"><path d="M.5 0l7 7M7.500 0l-7 7" stroke="#000" strokeWidth="1.600" /></svg>
        </button>
      </header>
      <div className="flex h-10 items-center gap-2.5 border-b border-white bg-[#6a8cf8] pl-[7px] text-white">
        <BookIcon />
        <div className="leading-4">
          <p className="font-bold">Сведения об организации</p>
          <p>Синим цветом помечены поля, обязательные для заполнения</p>
        </div>
      </div>

      <div className="flex gap-2.5 pt-1 pr-[11px] pl-2">
        <div className="flex w-[461px] flex-col gap-1.5">
          <MainData />
          <Communication />
        </div>
        <div className="grid min-w-0 flex-1">
          <Requisites />
        </div>
      </div>

      <div className="mt-[13px] flex h-5 items-end pl-px" role="tablist">
        {["Адреса", "Детали", "Интересы организации", "Пользовательские поля", "Договоры", "Документы", "Дополнительно"].map(
          (t, i) => (
            <button
              key={t}
              type="button"
              role="tab"
              aria-selected={i === 0}
              className={clsx(
                "flex items-center gap-1 border-t border-r-2 border-t-white border-r-[#404040] pr-1 pl-1.5",
                i === 0 ? "relative z-10 -mb-px h-[21px] border-l border-l-white bg-[#d4d0c8]" : "h-[18px]"
              )}
            >
              <BallsIcon />
              {t}
            </button>
          )
        )}
      </div>
      <div className="border border-t-white border-l-white border-r-[#404040] border-b-[#404040] p-[3px] shadow-[inset_-1px_-1px_0_#808080]">
        <div className="flex h-5 items-center justify-between bg-[#0087d9] pr-1.5 text-white">
          <HouseIcon />
          <h3 className="font-bold">Адреса организации</h3>
        </div>
        <div className="grid grid-cols-3 gap-3 pt-1.5 pr-[13px] pb-2.5 pl-[7px]">
          <Address title="Фактический адрес" />
          <Address title="Юридический адрес" />
          <Address title="Почтовый ( или Адрес доставки )" />
        </div>
      </div>

      <div className="flex justify-end gap-2.5 pt-2.5 pr-[41px] pb-2">
        <button type="button" className={clsx(RAISED, "h-[25px] w-[75px] outline-1 outline-black")}>Сохранить</button>
        <button type="button" className={clsx(RAISED, "h-[25px] w-[75px]")}>Справка</button>
        <button type="button" className={clsx(RAISED, "h-[25px] w-[75px]")}>Отмена</button>
      </div>
    </section>
  );
}

export default function App() {
  return (
    <main className="relative flex min-h-screen min-w-[1280px] flex-col overflow-hidden bg-[#d4d0c8] font-['DejaVu_Sans_Condensed','DejaVu_Sans',sans-serif] text-[11px] leading-[13px] whitespace-nowrap text-black">
      <MainWindow />
      <EditDialog />
    </main>
  );
}
